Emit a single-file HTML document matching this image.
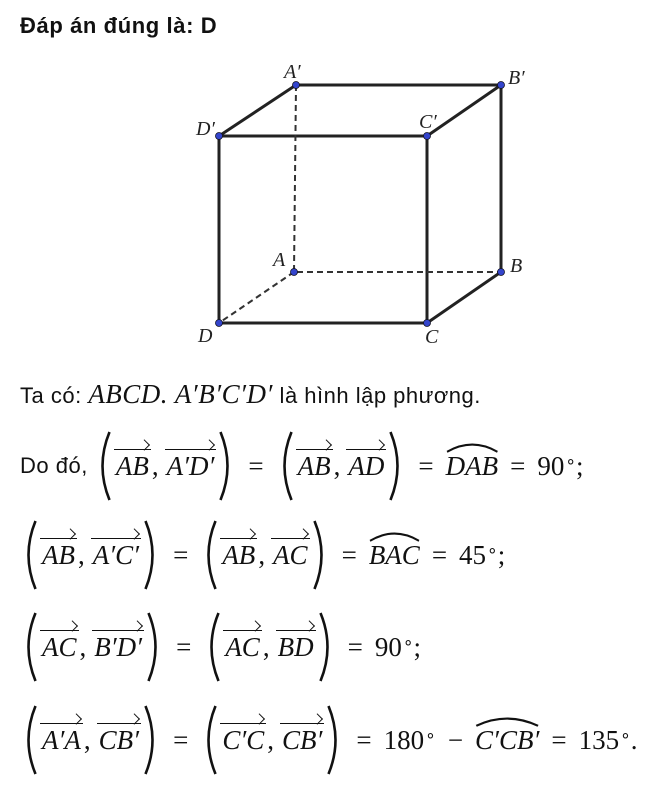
<!DOCTYPE html>
<html><head><meta charset="utf-8"><style>
body{margin:0;width:668px;height:790px;background:#fff;position:relative;font-family:"Liberation Sans",sans-serif;color:#111;overflow:hidden}
.t{position:absolute;left:20px;font-size:22px}
.row{position:absolute;left:20px;height:70px;display:flex;align-items:center;font-family:"Liberation Serif",serif;font-size:27px;white-space:nowrap}
.i{font-style:italic}
.v{position:relative;display:inline-block;font-style:italic;padding:0 3px}
.v::before{content:"";position:absolute;left:1px;right:1px;top:-2px;border-top:1.6px solid #111}
.v::after{content:"";position:absolute;right:2px;top:-6px;width:7px;height:7px;border-top:1.6px solid #111;border-right:1.6px solid #111;transform:rotate(45deg);transform-origin:top right}
.h{position:relative;display:inline-block;font-style:italic}
.h svg{position:absolute;left:0;top:-10px;width:100%;height:12px}
.p{width:19px;height:72px;flex:none}
.eq{margin:0 12px;font-style:normal}
sup{font-size:17px;position:relative;top:-4px;margin-left:1px}
</style></head><body>
<div class="t" style="top:13px;font-weight:bold;letter-spacing:0.6px">Đáp án đúng là: D</div>
<svg style="position:absolute;left:0;top:0" width="668" height="360">
<g stroke="#222" stroke-width="3" fill="none">
<path d="M296,85 L501,85 L501,272 L427,323 L219,323 L219,136 L296,85 M219,136 L427,136 L427,323 M427,136 L501,85"/>
</g>
<g stroke="#333" stroke-width="2" stroke-dasharray="6,4" fill="none">
<path d="M296,85 L294,272 L501,272 M294,272 L219,323"/>
</g>
<g fill="#3344cc" stroke="#112" stroke-width="0.8">
<circle cx="296" cy="85" r="3.5"/><circle cx="501" cy="85" r="3.5"/><circle cx="219" cy="136" r="3.5"/><circle cx="427" cy="136" r="3.5"/><circle cx="294" cy="272" r="3.5"/><circle cx="501" cy="272" r="3.5"/><circle cx="219" cy="323" r="3.5"/><circle cx="427" cy="323" r="3.5"/>
</g>
<g font-family="Liberation Serif" font-style="italic" font-size="20" fill="#222">
<text x="284" y="78">A′</text><text x="508" y="84">B′</text><text x="196" y="135">D′</text><text x="419" y="128">C′</text>
<text x="273" y="266">A</text><text x="510" y="272">B</text><text x="198" y="342">D</text><text x="425" y="343">C</text>
</g></svg>
<div class="t" style="top:379px;letter-spacing:0.5px">Ta có: <span class="i" style="font-family:'Liberation Serif',serif;font-size:27px;letter-spacing:0.5px">ABCD. A′B′C′D′</span> là hình lập phương.</div>

<div class="row" style="top:431px"><span style="font-family:'Liberation Sans',sans-serif;font-size:22px;margin-right:6px;letter-spacing:0.5px">Do đó,</span>
<svg class="p" viewBox="0 0 18 72"><path d="M15,2 Q1,36 15,70" stroke="#111" stroke-width="2.6" fill="none"/></svg><span class="v">AB</span>, <span class="v" style="margin-left:5px">A′D′</span><svg class="p" viewBox="0 0 18 72"><path d="M3,2 Q17,36 3,70" stroke="#111" stroke-width="2.6" fill="none"/></svg>
<span class="eq">=</span><svg class="p" viewBox="0 0 18 72"><path d="M15,2 Q1,36 15,70" stroke="#111" stroke-width="2.6" fill="none"/></svg><span class="v">AB</span>, <span class="v" style="margin-left:5px">AD</span><svg class="p" viewBox="0 0 18 72"><path d="M3,2 Q17,36 3,70" stroke="#111" stroke-width="2.6" fill="none"/></svg>
<span class="eq">=</span><span class="h">DAB<svg viewBox="0 0 50 10" preserveAspectRatio="none"><path d="M1,9 Q25,-3 49,9" stroke="#111" stroke-width="1.8" fill="none"/></svg></span><span class="eq">=</span>90<sup>∘</sup>;</div>

<div class="row" style="top:520px">
<svg class="p" viewBox="0 0 18 72"><path d="M15,2 Q1,36 15,70" stroke="#111" stroke-width="2.6" fill="none"/></svg><span class="v">AB</span>, <span class="v" style="margin-left:5px">A′C′</span><svg class="p" viewBox="0 0 18 72"><path d="M3,2 Q17,36 3,70" stroke="#111" stroke-width="2.6" fill="none"/></svg>
<span class="eq">=</span><svg class="p" viewBox="0 0 18 72"><path d="M15,2 Q1,36 15,70" stroke="#111" stroke-width="2.6" fill="none"/></svg><span class="v">AB</span>, <span class="v" style="margin-left:5px">AC</span><svg class="p" viewBox="0 0 18 72"><path d="M3,2 Q17,36 3,70" stroke="#111" stroke-width="2.6" fill="none"/></svg>
<span class="eq">=</span><span class="h">BAC<svg viewBox="0 0 50 10" preserveAspectRatio="none"><path d="M1,9 Q25,-3 49,9" stroke="#111" stroke-width="1.8" fill="none"/></svg></span><span class="eq">=</span>45<sup>∘</sup>;</div>

<div class="row" style="top:612px">
<svg class="p" viewBox="0 0 18 72"><path d="M15,2 Q1,36 15,70" stroke="#111" stroke-width="2.6" fill="none"/></svg><span class="v">AC</span>, <span class="v" style="margin-left:5px">B′D′</span><svg class="p" viewBox="0 0 18 72"><path d="M3,2 Q17,36 3,70" stroke="#111" stroke-width="2.6" fill="none"/></svg>
<span class="eq">=</span><svg class="p" viewBox="0 0 18 72"><path d="M15,2 Q1,36 15,70" stroke="#111" stroke-width="2.6" fill="none"/></svg><span class="v">AC</span>, <span class="v" style="margin-left:5px">BD</span><svg class="p" viewBox="0 0 18 72"><path d="M3,2 Q17,36 3,70" stroke="#111" stroke-width="2.6" fill="none"/></svg>
<span class="eq">=</span>90<sup>∘</sup>;</div>

<div class="row" style="top:705px">
<svg class="p" viewBox="0 0 18 72"><path d="M15,2 Q1,36 15,70" stroke="#111" stroke-width="2.6" fill="none"/></svg><span class="v">A′A</span>, <span class="v" style="margin-left:5px">CB′</span><svg class="p" viewBox="0 0 18 72"><path d="M3,2 Q17,36 3,70" stroke="#111" stroke-width="2.6" fill="none"/></svg>
<span class="eq">=</span><svg class="p" viewBox="0 0 18 72"><path d="M15,2 Q1,36 15,70" stroke="#111" stroke-width="2.6" fill="none"/></svg><span class="v">C′C</span>, <span class="v" style="margin-left:5px">CB′</span><svg class="p" viewBox="0 0 18 72"><path d="M3,2 Q17,36 3,70" stroke="#111" stroke-width="2.6" fill="none"/></svg>
<span class="eq">=</span>180<sup>∘</sup><span class="eq">−</span><span class="h">C′CB′<svg viewBox="0 0 50 10" preserveAspectRatio="none"><path d="M1,9 Q25,-3 49,9" stroke="#111" stroke-width="1.8" fill="none"/></svg></span><span class="eq">=</span>135<sup>∘</sup>.</div>
</body></html>
